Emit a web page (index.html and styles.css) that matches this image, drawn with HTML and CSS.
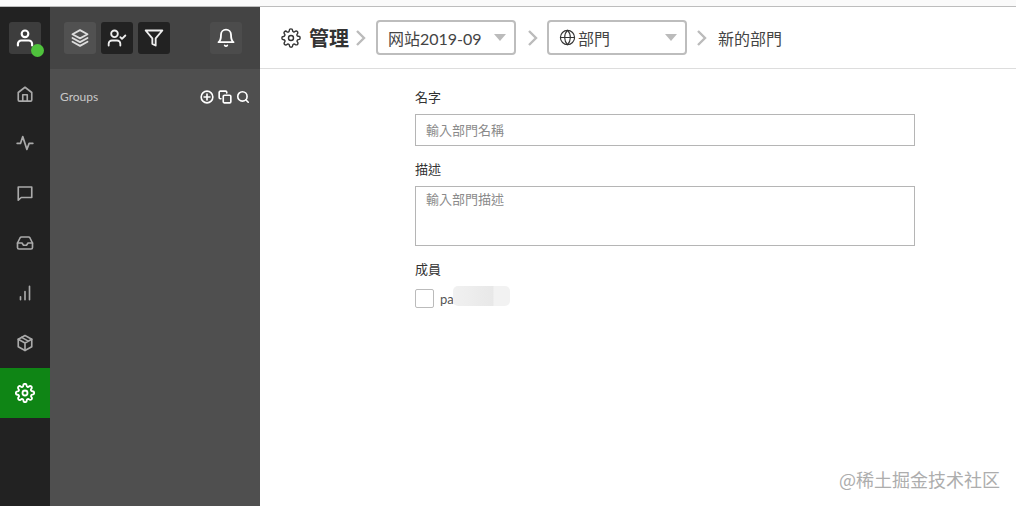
FILE: index.html
```
<!DOCTYPE html>
<html lang="zh-Hant">
<head>
<meta charset="utf-8">
<title>管理</title>
<link rel="stylesheet" href="styles.css">
</head>
<body>
<div class="strip"></div>
<div class="app">
  <nav class="rail">
    <div class="rail-top">
      <div class="avatar">
        <svg class="ic" viewBox="0 0 24 24"><circle cx="12" cy="7" r="4"/><path d="M3.500 21v-2a4 4 0 0 1 4-4h9a4 4 0 0 1 4 4v2"/></svg>
        <span class="dot"></span>
      </div>
    </div>
    <a class="rail-item"><svg class="ic" viewBox="0 0 24 24"><path d="M3 10l9-7 9 7v10a1.500 1.500 0 0 1-1.500 1.500h-15A1.500 1.500 0 0 1 3 20z"/><path d="M9 21.500V13h6v8.500"/></svg></a>
    <a class="rail-item"><svg class="ic" viewBox="0 0 24 24"><path d="M1.500 12.500H6l3-9 5.500 17 3-8h5"/></svg></a>
    <a class="rail-item"><svg class="ic" viewBox="0 0 24 24"><path d="M3 4h18v14H7l-4 3.500z"/></svg></a>
    <a class="rail-item"><svg class="ic" viewBox="0 0 24 24"><path d="M22 12h-6l-2 3h-4l-2-3H2"/><path d="M5.500 5L2 12v6a2 2 0 0 0 2 2h16a2 2 0 0 0 2-2v-6l-3.500-7a2 2 0 0 0-1.800-1H7.300a2 2 0 0 0-1.800 1z"/></svg></a>
    <a class="rail-item"><svg class="ic" viewBox="0 0 24 24"><path d="M18 3v18M12 10v11M6 17v4"/></svg></a>
    <a class="rail-item"><svg class="ic" viewBox="0 0 24 24"><path d="M12 2l9 5v10l-9 5-9-5V7z"/><path d="M3 7l9 5 9-5M12 12v10M7.500 4.500l9 5"/></svg></a>
    <a class="rail-item active"><svg class="ic" viewBox="0 0 24 24"><circle cx="12" cy="12" r="3"/><path d="M19.400 15a1.650 1.650 0 0 0 .33 1.820l.06.06a2 2 0 1 1-2.830 2.830l-.06-.06a1.650 1.650 0 0 0-2.820 1.170V21a2 2 0 1 1-4 0v-.09A1.650 1.650 0 0 0 7.200 19.740l-.06.06a2 2 0 1 1-2.830-2.830l.06-.06A1.650 1.650 0 0 0 3.200 14.100H3a2 2 0 1 1 0-4h.09A1.650 1.650 0 0 0 4.260 7.300l-.06-.06a2 2 0 1 1 2.830-2.830l.06.06A1.650 1.650 0 0 0 9.900 3.300V3a2 2 0 1 1 4 0v.09a1.650 1.650 0 0 0 2.800 1.170l.06-.06a2 2 0 1 1 2.830 2.830l-.06.06a1.650 1.650 0 0 0 1.170 2.810H21a2 2 0 1 1 0 4h-.09a1.650 1.650 0 0 0-1.510 1z"/></svg></a>
  </nav>
  <aside class="side">
    <div class="side-head">
      <div class="tool light"><svg class="ic" viewBox="0 0 24 24"><path d="M12 2.500L3 7.500l9 5 9-5z"/><path d="M3 12l9 5 9-5M3 16.500l9 5 9-5"/></svg></div>
      <div class="tool dark"><svg class="ic" viewBox="0 0 24 24"><circle cx="9" cy="7" r="4"/><path d="M2 21v-2a4 4 0 0 1 4-4h6a4 4 0 0 1 4 4v2M16 11l2 2 4-4"/></svg></div>
      <div class="tool dark"><svg class="ic" viewBox="0 0 24 24"><path d="M22 3H2l8 9.500V19l4 2v-8.500z"/></svg></div>
      <div class="tool light bell"><svg class="ic" viewBox="0 0 24 24"><path d="M18 8a6 6 0 0 0-12 0c0 7-3 9-3 9h18s-3-2-3-9"/><path d="M10.500 21a2 2 0 0 0 3 0"/></svg></div>
    </div>
    <div class="groups">
      <span class="groups-title">Groups</span>
      <div class="group-tools">
        <svg class="mini" viewBox="0 0 24 24"><circle cx="12" cy="12" r="10"/><path d="M12 7v10M7 12h10"/></svg>
        <svg class="mini" viewBox="0 0 24 24"><rect x="9" y="9" width="13" height="13" rx="2"/><path d="M5 15H4a2 2 0 0 1-2-2V4a2 2 0 0 1 2-2h9a2 2 0 0 1 2 2v1"/></svg>
        <svg class="mini" viewBox="0 0 24 24"><circle cx="11" cy="11" r="8"/><path d="M21 21l-4.300-4.300"/></svg>
      </div>
    </div>
  </aside>
  <main class="main">
    <header class="crumbs">
      <svg class="gear" viewBox="0 0 24 24"><circle cx="12" cy="12" r="3"/><path d="M19.400 15a1.650 1.650 0 0 0 .33 1.820l.06.06a2 2 0 1 1-2.830 2.830l-.06-.06a1.650 1.650 0 0 0-2.820 1.170V21a2 2 0 1 1-4 0v-.09A1.650 1.650 0 0 0 7.200 19.740l-.06.06a2 2 0 1 1-2.830-2.830l.06-.06A1.650 1.650 0 0 0 3.200 14.100H3a2 2 0 1 1 0-4h.09A1.650 1.650 0 0 0 4.260 7.300l-.06-.06a2 2 0 1 1 2.830-2.830l.06.06A1.650 1.650 0 0 0 9.900 3.300V3a2 2 0 1 1 4 0v.09a1.650 1.650 0 0 0 2.800 1.170l.06-.06a2 2 0 1 1 2.830 2.830l-.06.06a1.650 1.650 0 0 0 1.170 2.810H21a2 2 0 1 1 0 4h-.09a1.650 1.650 0 0 0-1.510 1z"/></svg>
      <h1 class="title">管理</h1>
      <svg class="chev first" viewBox="0 0 12 16"><path d="M2 1l7 7-7 7"/></svg>
      <div class="select">
        <span>网站2019-09</span>
        <i class="caret"></i>
      </div>
      <svg class="chev second" viewBox="0 0 12 16"><path d="M2 1l7 7-7 7"/></svg>
      <div class="select">
        <span class="sel-icon">
          <svg class="globe" viewBox="0 0 24 24"><circle cx="12" cy="12" r="10"/><path d="M2 12h20M12 2c3 3 4 6.500 4 10s-1 7-4 10c-3-3-4-6.500-4-10s1-7 4-10z"/></svg>部門
        </span>
        <i class="caret"></i>
      </div>
      <svg class="chev third" viewBox="0 0 12 16"><path d="M2 1l7 7-7 7"/></svg>
      <span class="current">新的部門</span>
    </header>
    <form class="form">
      <label class="label">名字</label>
      <input class="input" type="text" placeholder="輸入部門名稱">
      <label class="label">描述</label>
      <textarea class="area" placeholder="輸入部門描述"></textarea>
      <label class="label">成員</label>
      <div class="member">
        <span class="check"></span>
        <span class="name">pa</span>
        <span class="smudge"></span>
      </div>
    </form>
  </main>
</div>
<div class="watermark">@稀土掘金技术社区</div>
</body>
</html>
```
FILE: styles.css
```
* { box-sizing: border-box; }
html, body { margin: 0; height: 100%; overflow: hidden; }
body {
  display: flex;
  flex-direction: column;
  position: relative;
  background: #fff;
  font-family: Lato, "Noto Sans CJK TC", sans-serif;
  color: #333;
}
.strip { height: 7px; flex: none; background: #fafafa; border-bottom: 1px solid #bdbdbd; }
.app { flex: 1; display: flex; min-height: 0; }
.ic { width: 18px; height: 18px; fill: none; stroke: currentColor; stroke-width: 2.200; stroke-linecap: round; stroke-linejoin: round; }

.rail { width: 50px; flex: none; background: #222; color: #aaa; display: flex; flex-direction: column; }
.rail-top { height: 62px; display: flex; justify-content: center; padding-top: 15px; }
.avatar { position: relative; width: 32px; height: 32px; border-radius: 3px; background: #3d3d3d; color: #fff; display: flex; align-items: center; justify-content: center; }
.avatar .ic { width: 20px; height: 20px; stroke-width: 2.600; }
.dot { position: absolute; right: -3px; bottom: -3px; width: 13px; height: 13px; border-radius: 50%; background: #4fc23c; }
.rail-item { height: 50px; flex: none; display: flex; align-items: center; justify-content: center; }
.rail-item.active { background: #0f8515; color: #fff; }
.rail-item.active .ic { width: 20px; height: 20px; }
.rail-item:nth-child(2) { height: 49px; }

.side { width: 210px; flex: none; background: #4f4f4f; display: flex; flex-direction: column; }
.side-head { height: 62px; flex: none; background: #444; display: flex; gap: 5px; padding: 15px 18px 0 14px; }
.tool { width: 32px; height: 32px; border-radius: 3px; display: flex; align-items: center; justify-content: center; color: #eee; }
.tool .ic { width: 20px; height: 20px; }
.tool.light { background: #515151; color: #ddd; }
.tool.dark { background: #222; }
.tool.bell { margin-left: auto; background: #4c4c4c; color: #fff; }
.groups { display: flex; align-items: center; justify-content: space-between; padding: 20px 10px 0 10px; }
.groups-title { font-size: 12px; color: #c8c8c8; }
.group-tools { display: flex; gap: 4px; }
.mini { width: 14px; height: 14px; fill: none; stroke: #fff; stroke-width: 2.800; stroke-linecap: round; stroke-linejoin: round; }

.main { flex: 1; min-width: 0; background: #fff; }
.crumbs { height: 62px; display: flex; align-items: center; padding-left: 21px; border-bottom: 1px solid #ddd; }
.gear { width: 20px; height: 20px; fill: none; stroke: #333; stroke-width: 1.700; stroke-linejoin: round; flex: none; }
.title { margin: 0 0 0 8px; font-size: 20px; font-weight: 700; line-height: 28px; color: #333; }
.chev { width: 12px; height: 16px; fill: none; stroke: #bbb; stroke-width: 2.400; flex: none; }
.chev.first { margin: 0 9px 0 6px; }
.chev.second { margin: 0 8px 0 11px; }
.chev.third { margin: 0 10px 0 9px; }
.select { width: 140px; height: 35px; display: flex; align-items: center; justify-content: space-between; padding: 0 8px 0 10px; border: 2px solid #bdbdbd; border-radius: 4px; font-size: 16px; color: #444; background: #fff; }
.sel-icon { display: flex; align-items: center; gap: 2px; }
.globe { width: 17px; height: 17px; fill: none; stroke: #333; stroke-width: 1.600; }
.caret { width: 0; height: 0; border-left: 6px solid transparent; border-right: 6px solid transparent; border-top: 7px solid #bbb; }
.current { font-size: 16px; color: #444; }

.form { width: 500px; margin-left: 155px; padding-top: 20px; display: flex; flex-direction: column; }
.label { font-size: 13px; line-height: 16px; height: 25px; color: #333; }
.input { width: 500px; height: 32px; padding: 0 10px; border: 1px solid #b5b5b5; border-radius: 0; font: 13px Lato, "Noto Sans CJK TC", sans-serif; margin-bottom: 15px; outline: none; }
.area { width: 500px; height: 60px; padding: 3px 10px; border: 1px solid #b5b5b5; border-radius: 0; font: 13px/18px Lato, "Noto Sans CJK TC", sans-serif; margin-bottom: 15px; outline: none; resize: none; display: block; }
.input::placeholder, .area::placeholder { color: #8a8a8a; opacity: 1; }
.member { position: relative; display: flex; align-items: center; gap: 6px; margin-top: 3px; height: 19px; }
.check { width: 19px; height: 19px; border: 1px solid #bbb; border-radius: 2px; background: #fff; }
.name { font-size: 13px; color: #555; }
.smudge { position: absolute; left: 38px; top: -3px; width: 57px; height: 20px; border-radius: 5px; background: linear-gradient(90deg, #f1f1f1, #e8e8e8 70%, #f2f2f2 72%); filter: blur(0.6px); }
.watermark { position: absolute; right: 16px; bottom: 16px; font: 18px/22px "Noto Sans CJK SC", sans-serif; color: #adadad; }
```
